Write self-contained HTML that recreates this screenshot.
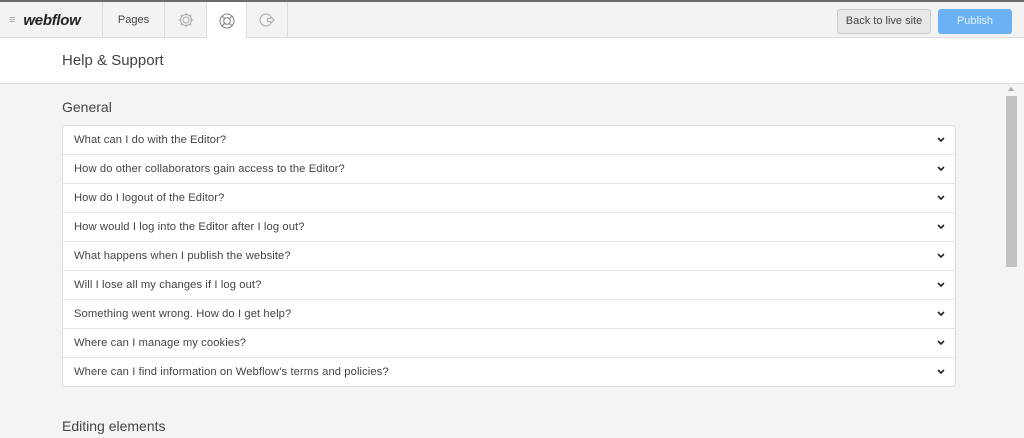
<!DOCTYPE html>
<html><head><style>
*{box-sizing:border-box;margin:0;padding:0}
body{width:1024px;height:438px;overflow:hidden;background:#f4f4f4;font-family:"Liberation Sans",Arial,sans-serif;position:relative}
.top{position:absolute;left:0;top:0;width:1024px;height:38px;background:#f3f3f3;border-top:2px solid #6b6b6b;border-bottom:1px solid #ddd}
.tab{position:absolute;top:0;height:36px;border-right:1px solid #ddd;display:flex;align-items:center;justify-content:center}
.hdr{position:absolute;left:0;top:38px;width:1024px;height:46px;background:#fff;border-bottom:1px solid #ddd}
.list{position:absolute;left:62px;top:125px;width:894px;background:#fff;border:1px solid #ddd;border-radius:3px}
.row{height:29px;border-bottom:1px solid #e4e4e4;font-size:11.2px;letter-spacing:0.1px;color:#444;padding-left:11px;line-height:29px;position:relative}
.row:last-child{border-bottom:none;height:28px}
.row svg{position:absolute;right:10px;top:11px}
.btn{position:absolute;top:7px;height:25px;border-radius:3px;font-size:11px;display:flex;align-items:center;justify-content:center;padding-bottom:2px}
</style></head><body>
<div class="top">
 <div class="tab" style="left:0;width:103px;justify-content:flex-start;padding-left:9px">
  <span style="color:#999;font-size:11px">≡</span>
  <span style="font-weight:bold;font-style:italic;font-size:15px;color:#222;margin-left:8px;letter-spacing:-0.3px">webflow</span></div>
 <div class="tab" style="left:103px;width:62px;font-size:11px;color:#444">Pages</div>
 <div class="tab" style="left:165px;width:42px"><svg width="18" height="18" viewBox="0 0 18 18" fill="none" stroke="#aaa" stroke-width="1"><circle cx="9" cy="9" r="3"/><path d="M9 1.5v2.5M9 14v2.5M1.5 9h2.5M14 9h2.5M3.7 3.7l1.8 1.8M12.5 12.5l1.8 1.8M3.7 14.3l1.8-1.8M12.5 5.5l1.8-1.8"/><circle cx="9" cy="9" r="5.5"/></svg></div>
 <div class="tab" style="left:207px;width:40px;background:#fff;height:37px"><svg width="18" height="18" viewBox="0 0 18 18" fill="none" stroke="#888" stroke-width="1.1"><circle cx="9" cy="9" r="7"/><circle cx="9" cy="9" r="3.3"/><path d="M4 4l2.7 2.7M14 4l-2.7 2.7M4 14l2.7-2.7M14 14l-2.7-2.7"/></svg></div>
 <div class="tab" style="left:247px;width:41px"><svg width="18" height="18" viewBox="0 0 18 18" fill="none" stroke="#aaa" stroke-width="1.1"><path d="M12 4.5A6 6 0 1 0 12 13.5"/><path d="M9.5 7.5h3V5.5l3.5 3.5-3.5 3.5v-2h-3z"/></svg></div>
 <div class="btn" style="left:837px;width:94px;background:#e8e8e8;border:1px solid #ccc;color:#444">Back to live site</div>
 <div class="btn" style="left:938px;width:74px;background:#6ab2f5;color:#e8f3fe">Publish</div>
</div>
<div class="hdr"><div style="position:absolute;left:62px;top:14px;font-size:15px;color:#444">Help &amp; Support</div></div>
<div style="position:absolute;left:62px;top:99px;font-size:14px;color:#444">General</div>
<div class="list">
<div class="row">What can I do with the Editor?<svg width="8" height="6"><path d="M1 1l3 3 3-3" stroke="#222" stroke-width="1.6" fill="none"/></svg></div>
<div class="row">How do other collaborators gain access to the Editor?<svg width="8" height="6"><path d="M1 1l3 3 3-3" stroke="#222" stroke-width="1.6" fill="none"/></svg></div>
<div class="row">How do I logout of the Editor?<svg width="8" height="6"><path d="M1 1l3 3 3-3" stroke="#222" stroke-width="1.6" fill="none"/></svg></div>
<div class="row">How would I log into the Editor after I log out?<svg width="8" height="6"><path d="M1 1l3 3 3-3" stroke="#222" stroke-width="1.6" fill="none"/></svg></div>
<div class="row">What happens when I publish the website?<svg width="8" height="6"><path d="M1 1l3 3 3-3" stroke="#222" stroke-width="1.6" fill="none"/></svg></div>
<div class="row">Will I lose all my changes if I log out?<svg width="8" height="6"><path d="M1 1l3 3 3-3" stroke="#222" stroke-width="1.6" fill="none"/></svg></div>
<div class="row">Something went wrong. How do I get help?<svg width="8" height="6"><path d="M1 1l3 3 3-3" stroke="#222" stroke-width="1.6" fill="none"/></svg></div>
<div class="row">Where can I manage my cookies?<svg width="8" height="6"><path d="M1 1l3 3 3-3" stroke="#222" stroke-width="1.6" fill="none"/></svg></div>
<div class="row">Where can I find information on Webflow’s terms and policies?<svg width="8" height="6"><path d="M1 1l3 3 3-3" stroke="#222" stroke-width="1.6" fill="none"/></svg></div>
</div>
<div style="position:absolute;left:62px;top:418px;font-size:14px;color:#444">Editing elements</div>
<div style="position:absolute;left:1006px;top:96px;width:11px;height:171px;background:#c1c1c1"></div>
<div style="position:absolute;left:1008px;top:87px;width:0;height:0;border-left:3px solid transparent;border-right:3px solid transparent;border-bottom:4px solid #a8a8a8"></div>
</body></html>
